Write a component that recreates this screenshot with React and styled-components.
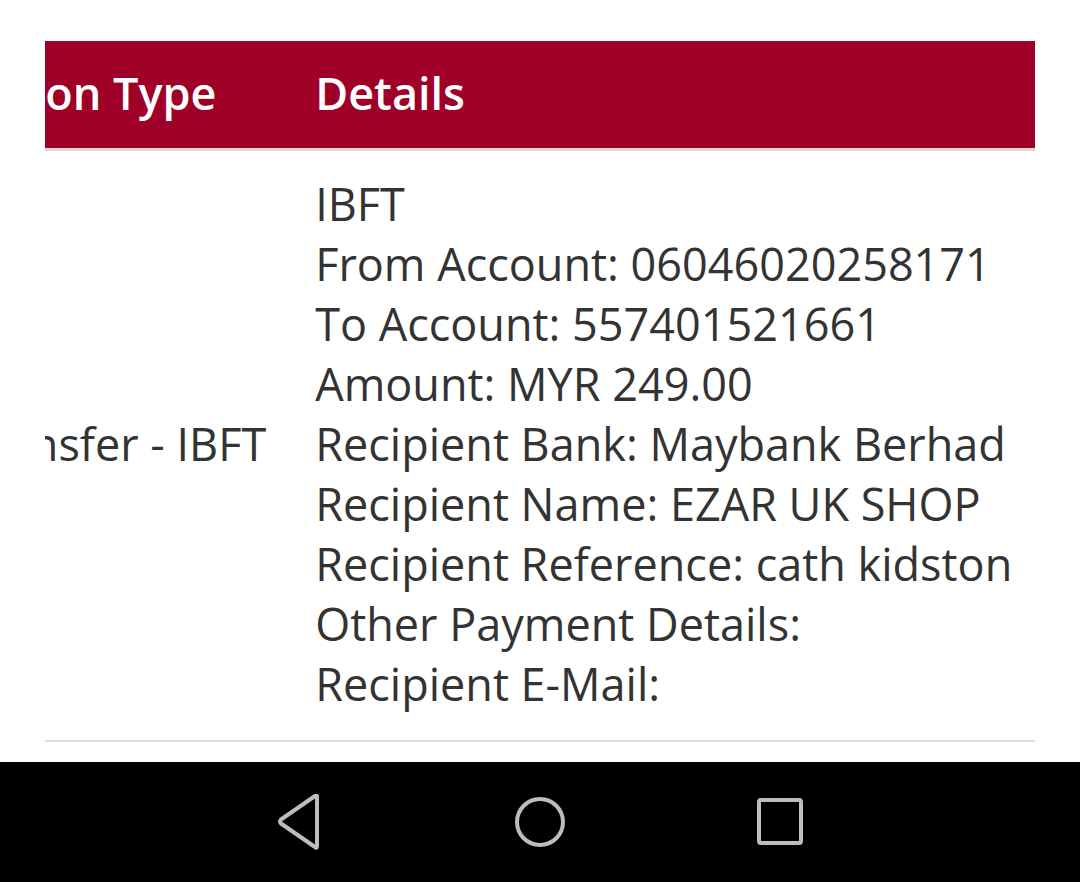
import React, { useLayoutEffect, useRef } from 'react'
import styled, { createGlobalStyle } from 'styled-components'

const details = [
  'IBFT',
  'From Account: 06046020258171',
  'To Account: 557401521661',
  'Amount: MYR 249.00',
  'Recipient Bank: Maybank Berhad',
  'Recipient Name: EZAR UK SHOP',
  'Recipient Reference: cath kidston',
  'Other Payment Details:',
  'Recipient E-Mail:',
]

function App() {
  const scrollerRef = useRef(null)
  const detailsRef = useRef(null)

  // the table is scrolled sideways so the Details column sits in view
  useLayoutEffect(() => {
    if (scrollerRef.current && detailsRef.current) {
      scrollerRef.current.scrollLeft = detailsRef.current.offsetLeft - 245
    }
  }, [])

  return (
    <>
      <GlobalStyle />
      <Screen>
        <Content>
          <TableScroller ref={scrollerRef}>
            <Table>
              <thead>
                <tr>
                  <HeadCell $first>Transaction Type</HeadCell>
                  <HeadCell ref={detailsRef}>Details</HeadCell>
                </tr>
              </thead>
              <tbody>
                <tr>
                  <BodyCell $first>Fund Transfer - IBFT</BodyCell>
                  <BodyCell>
                    {details.map((line) => (
                      <DetailLine key={line}>{line}</DetailLine>
                    ))}
                  </BodyCell>
                </tr>
              </tbody>
            </Table>
          </TableScroller>
        </Content>
        <NavBar>
          <NavButton aria-label="Back">
            <svg width="48" height="56" viewBox="0 0 48 56">
              <path
                d="M41 3 L41 52 Q41 55 39 53 L5 29.5 Q3 27.5 5 25.5 L39 2 Q41 0.5 41 3 Z"
                fill="none"
                stroke="#bdbdbd"
                strokeWidth="4"
                strokeLinejoin="round"
              />
            </svg>
          </NavButton>
          <NavButton aria-label="Home">
            <svg width="54" height="54" viewBox="0 0 54 54">
              <circle cx="27" cy="27" r="23" fill="none" stroke="#bdbdbd" strokeWidth="4" />
            </svg>
          </NavButton>
          <NavButton aria-label="Recent apps">
            <svg width="48" height="50" viewBox="0 0 48 50">
              <rect x="3" y="3" width="42" height="43" rx="2" fill="none" stroke="#bdbdbd" strokeWidth="4" />
            </svg>
          </NavButton>
        </NavBar>
      </Screen>
    </>
  )
}

const GlobalStyle = createGlobalStyle`
  html, body {
    margin: 0;
    padding: 0;
    background: #fff;
  }
  body {
    font-family: 'Open Sans', 'Noto Sans', sans-serif;
  }
`

const Screen = styled.div`
  display: flex;
  flex-direction: column;
  width: 1080px;
  height: 882px;
  overflow: hidden;
`

const Content = styled.div`
  flex: 1;
  padding: 41px 45px 0;
`

const TableScroller = styled.div`
  width: 990px;
  overflow: hidden;
`

const Table = styled.table`
  border-collapse: collapse;
  font-size: 45px;
  line-height: 60px;
  color: #333;
`

const HeadCell = styled.th`
  padding: 22px ${(p) => (p.$first ? '24px' : '26px')} 25px 25px;
  background: #9e0028;
  color: #fff;
  font-weight: 600;
  text-align: left;
  white-space: nowrap;
  border-bottom: 3px solid #e2dada;
`

const BodyCell = styled.td`
  padding: 23px ${(p) => (p.$first ? '24px' : '26px')} 26px 25px;
  vertical-align: ${(p) => (p.$first ? 'middle' : 'top')};
  white-space: nowrap;
  border-bottom: 2px solid #dddddd;
`

const DetailLine = styled.div`
  white-space: nowrap;
`

const NavBar = styled.nav`
  display: flex;
  justify-content: center;
  align-items: center;
  height: 120px;
  background: #000;
`

const NavButton = styled.div`
  display: flex;
  justify-content: center;
  align-items: center;
  width: 240px;
  height: 120px;
`

export default App
